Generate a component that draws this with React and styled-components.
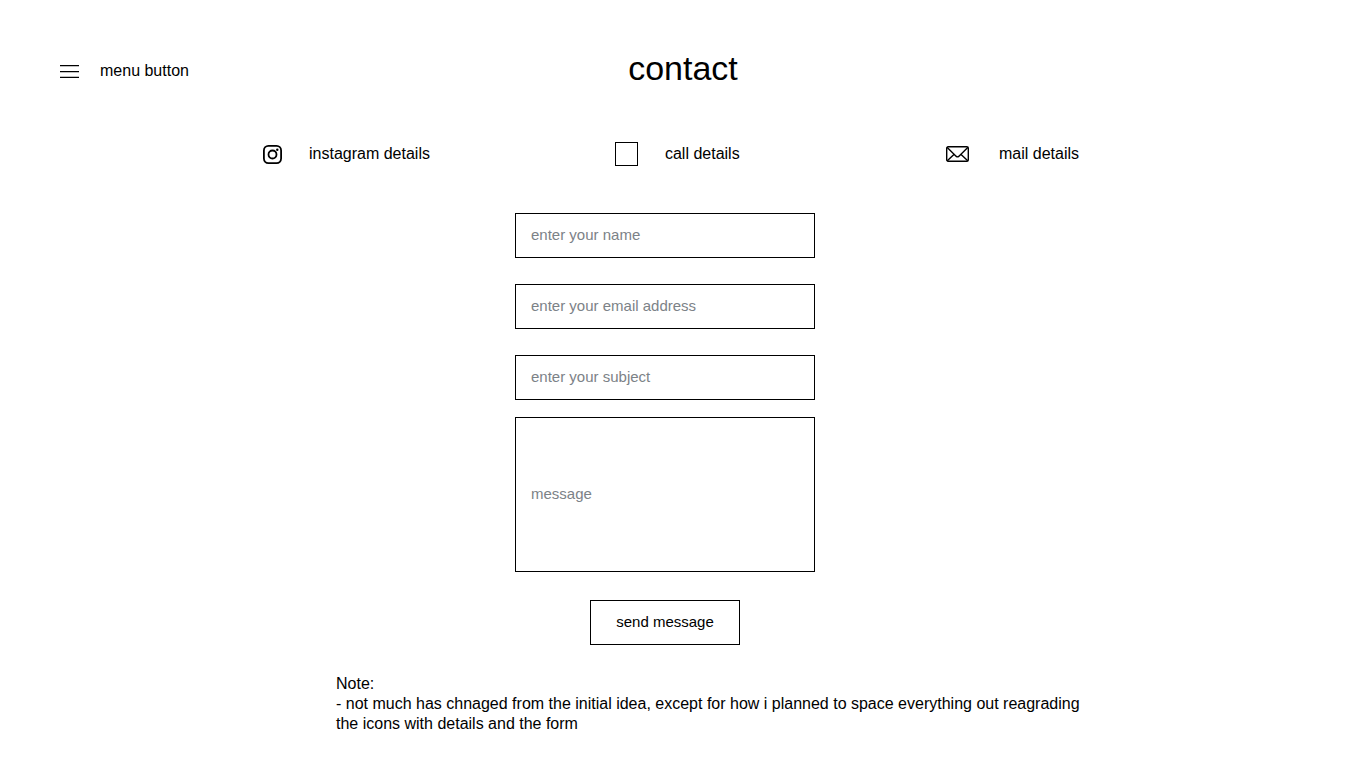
import React from "react";
import styled, { createGlobalStyle } from "styled-components";

const GlobalStyle = createGlobalStyle`
  * { box-sizing: border-box; }
  body {
    margin: 0;
    background: #fff;
    color: #000;
    font-family: "Liberation Sans", Arial, sans-serif;
    font-size: 16px;
    line-height: 20px;
  }
`;

const Page = styled.div`
  display: flex;
  flex-direction: column;
  padding: 48px 60px 0;
`;

const Header = styled.header`
  display: grid;
  grid-template-columns: 1fr auto 1fr;
  align-items: end;
  height: 40px;
`;

const MenuButton = styled.button`
  display: flex;
  align-items: center;
  justify-self: start;
  gap: 21px;
  padding: 0 0 7px;
  border: 0;
  background: none;
  color: inherit;
  font: inherit;
`;

const Title = styled.h1`
  margin: 0;
  font-size: 34px;
  line-height: 40px;
  font-weight: 400;
`;

const Details = styled.ul`
  display: grid;
  grid-template-columns: 352fr 331fr 133fr;
  align-items: center;
  height: 24px;
  margin: 54px 227px 0 203px;
  padding: 0;
  list-style: none;
`;

const Detail = styled.li`
  display: flex;
  align-items: center;
  gap: ${(p) => p.$gap}px;
  white-space: nowrap;
`;

const Icon = styled.svg`
  display: block;
  flex: none;
  fill: none;
  stroke: #000;
`;

const Form = styled.form`
  display: flex;
  flex-direction: column;
  align-items: center;
  align-self: center;
  width: 300px;
  margin: 47px 36px 0 0;
`;

const Field = styled.input`
  width: 100%;
  height: 45px;
  margin: 0 0 ${(p) => p.$after || 26}px;
  padding: 0 15px 2px;
  border: 1px solid #000;
  border-radius: 0;
  background: #fff;
  font: inherit;
  font-size: 15px;
  &::placeholder { color: #7c8287; opacity: 1; }
`;

const Message = styled.textarea`
  display: block;
  width: 100%;
  height: 155px;
  padding: 66px 15px;
  border: 1px solid #000;
  border-radius: 0;
  resize: none;
  font: inherit;
  font-size: 15px;
  &::placeholder { color: #7c8287; opacity: 1; }
`;

const Submit = styled.button`
  width: 150px;
  height: 45px;
  margin-top: 28px;
  padding: 0 0 2px;
  border: 1px solid #000;
  background: #fff;
  color: #000;
  font: inherit;
  font-size: 15px;
`;

const Note = styled.p`
  align-self: center;
  width: 744px;
  max-width: 100%;
  margin: 29px 0 0 50px;
`;

export default function App() {
  return (
    <>
      <GlobalStyle />
      <Page>
        <Header>
          <MenuButton type="button">
            <Icon width="19" height="14" viewBox="0 0 19 14" strokeWidth="1.3">
              <path d="M0 1.6h19M0 7.6h19M0 13.4h19" />
            </Icon>
            menu button
          </MenuButton>
          <Title>contact</Title>
        </Header>
        <Details>
          <Detail $gap={27}>
            <Icon width="19" height="19" viewBox="0 0 19 19" strokeWidth="1.8">
              <rect x="0.9" y="0.9" width="17.2" height="17.2" rx="4.5" />
              <circle cx="9.5" cy="9.5" r="4" />
              <circle cx="14.3" cy="4.7" r="1.2" fill="#000" stroke="none" />
            </Icon>
            instagram details
          </Detail>
          <Detail $gap={27}>
            <Icon width="23" height="24" viewBox="0 0 23 24">
              <rect x="0.5" y="0.5" width="22" height="23" />
            </Icon>
            call details
          </Detail>
          <Detail $gap={30}>
            <Icon width="23" height="16" viewBox="0 0 23 16" strokeWidth="1.4">
              <rect x="0.7" y="0.7" width="21.6" height="14.6" rx="1.5" />
              <path d="M1 1.2l9.3 9.2q1.2 1 2.4 0L22 1.2M1 15l7.2-6.8M22 15l-7.2-6.8" />
            </Icon>
            mail details
          </Detail>
        </Details>
        <Form onSubmit={(e) => e.preventDefault()}>
          <Field type="text" aria-label="name" placeholder="enter your name" />
          <Field type="email" aria-label="email address" placeholder="enter your email address" />
          <Field $after={17} type="text" aria-label="subject" placeholder="enter your subject" />
          <Message aria-label="message" placeholder="message" />
          <Submit type="submit">send message</Submit>
        </Form>
        <Note>
          Note:
          <br />- not much has chnaged from the initial idea, except for how i planned to space everything out reagrading the icons with details and the form
        </Note>
      </Page>
    </>
  );
}
